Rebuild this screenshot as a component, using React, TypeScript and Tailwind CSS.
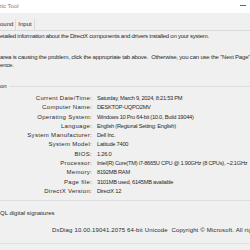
import React from 'react'

const rows: [string, string][] = [
  ['Current Date/Time:', 'Saturday, March 9, 2024, 8:21:53 PM'],
  ['Computer Name:', 'DESKTOP-UQPO2MV'],
  ['Operating System:', 'Windows 10 Pro 64-bit (10.0, Build 19044)'],
  ['Language:', 'English (Regional Setting: English)'],
  ['System Manufacturer:', 'Dell Inc.'],
  ['System Model:', 'Latitude 7400'],
  ['BIOS:', '1.26.0'],
  ['Processor:', 'Intel(R) Core(TM) i7-8665U CPU @ 1.90GHz (8 CPUs), ~2.1GHz'],
  ['Memory:', '8192MB RAM'],
  ['Page file:', '3101MB used, 6145MB available'],
  ['DirectX Version:', 'DirectX 12'],
]

export default function App() {
  return (
    <div
      className="w-[250px] h-[250px] overflow-hidden bg-[#f0f0f0] text-[6px] text-[#2a2a2a] flex flex-col whitespace-nowrap"
      style={{ fontFamily: '"Liberation Sans", Arial, sans-serif' }}
    >
      {/* title bar */}
      <div className="h-[13px] bg-white flex items-center justify-between shrink-0">
        <span className="text-[#808080]">tic Tool</span>
        <span className="w-[6px] h-px bg-[#666] mr-[4px] mb-[3px]" />
      </div>

      {/* tab strip */}
      <div className="h-[18px] flex items-end border-b border-[#dadada] shrink-0">
        <div className="h-[11px] flex items-center pr-[2px] border-r border-[#dadada]">ound</div>
        <div className="h-[11px] flex items-center px-[2px] border-r border-[#dadada]">Input</div>
      </div>

      <div className="mt-[1px] leading-[8px] h-[8px] tracking-[-0.25px] shrink-0">
        etailed information about the DirectX components and drivers installed on your system.
      </div>

      <div className="mt-[13px] leading-[8px] tracking-[-0.2px] shrink-0">
        <div>area is causing the problem, click the appropriate tab above.&nbsp; Otherwise, you can use the "Next Page" button</div>
        <div>ence.</div>
      </div>

      {/* system information group */}
      <div className="mt-[13px] h-[8px] flex items-center shrink-0">
        <span className="pr-[2px]">on</span>
        <div className="flex-1 h-px bg-[#dddddd]" />
      </div>

      <div className="mt-[4px] grid grid-cols-[92px_1fr] auto-rows-[9.3px] leading-[9.3px] shrink-0">
        {rows.map(([label, value]) => (
          <React.Fragment key={label}>
            <div className="text-right tracking-[0.3px]">{label}</div>
            <div className="pl-[5px] text-[5.7px] tracking-[-0.25px]">{value}</div>
          </React.Fragment>
        ))}
      </div>

      <div className="mt-[4px] h-px bg-[#dddddd] shrink-0" />

      <div className="mt-[8px] h-[8px] leading-[8px] shrink-0">QL digital signatures</div>

      <div className="mt-[9px] h-[8px] leading-[8px] pl-[52px] tracking-[0.15px] shrink-0">
        DxDiag 10.00.19041.2075 64-bit Unicode&nbsp; Copyright © Microsoft. All rights reserved.
      </div>

      <div className="mt-[9px] h-px bg-[#e2e2e2] shrink-0" />
    </div>
  )
}
